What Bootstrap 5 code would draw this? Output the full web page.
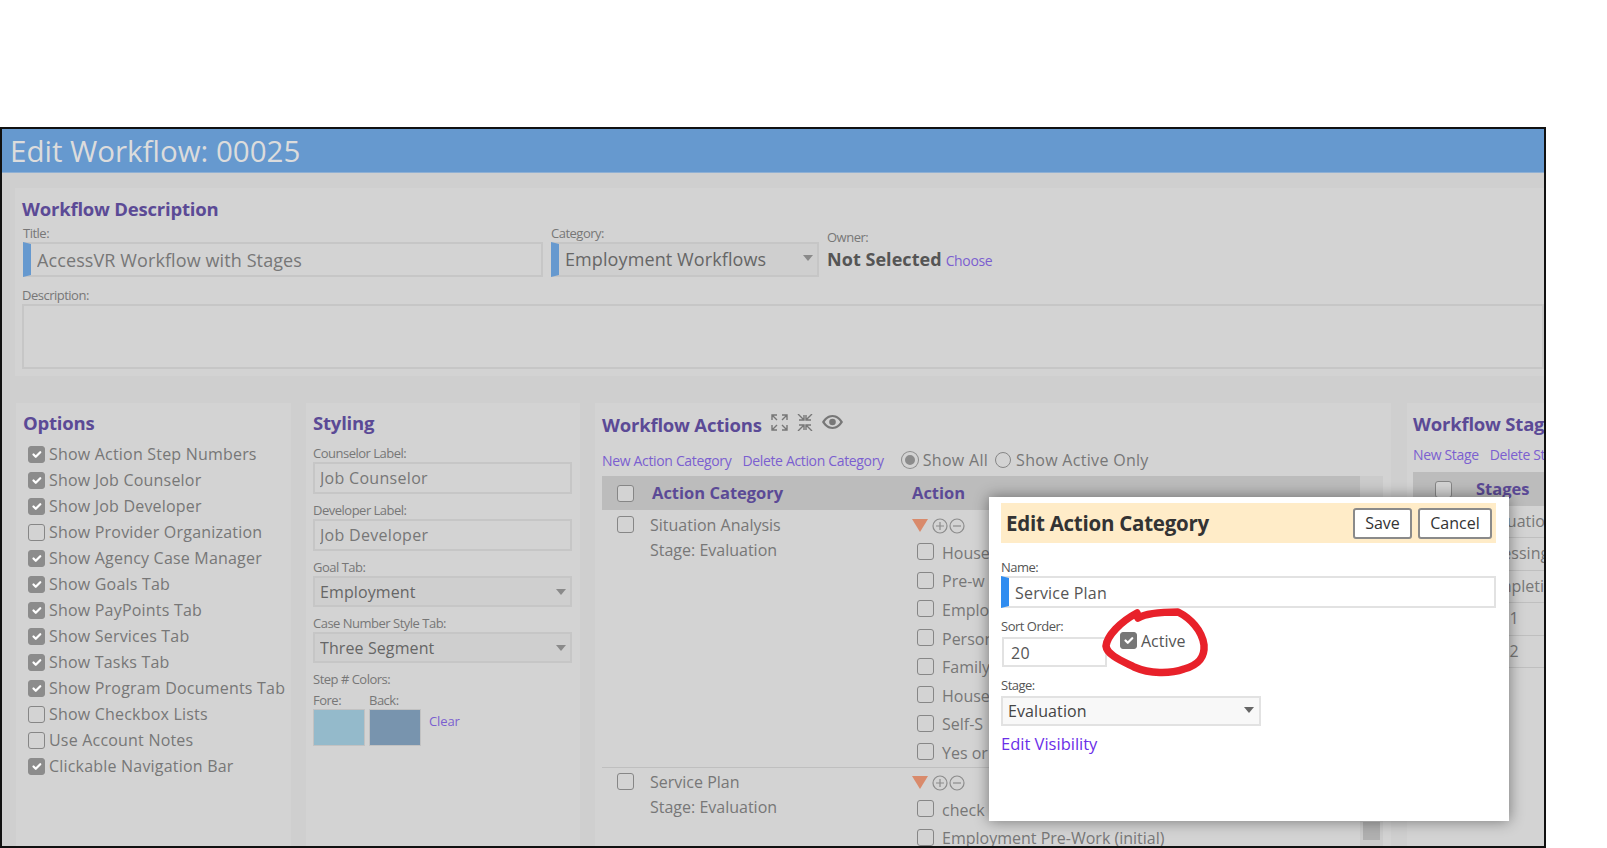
<!DOCTYPE html>
<html lang="en">
<head>
    <meta charset="UTF-8">
    <meta name="viewport" content="width=device-width, initial-scale=1.0">
    <title>Edit Workflow: 00025</title>
    <link href="https://cdn.jsdelivr.net/npm/bootstrap@5.3.0/dist/css/bootstrap.min.css" rel="stylesheet">
    <style>
        body {
            margin: 0;
            background: #fff;
            font-family: "Open Sans", "Liberation Sans", sans-serif;
            color: #777;
            overflow: hidden;
        }

        .wf-frame {
            position: relative;
            margin-top: 127px;
            width: 1546px;
            height: 721px;
            border: 2px solid #111;
            background: #cfcfcf;
            overflow: hidden;
        }

        .wf-head {
            height: 44px;
            padding-left: 8px;
            background: #6699cf;
            color: #dcdcdc;
            font-size: 29.5px;
            line-height: 44px;
            border-bottom: 1px solid #8fb0d4;
        }

        .wf-panel { background: #d3d3d3; }
        .wf-desc { height: 188px; margin: 15px 0 27px 13px; padding: 8px 0 0 7px; }
        .wf-lower { height: 445px; }
        .wf-options { width: 275px; margin-left: 14px; padding: 7px 0 0 7px; }
        .wf-styling { width: 274px; margin-left: 15px; padding: 7px 8px 0 7px; }
        .wf-actions { width: 796px; margin-left: 15px; padding: 7px 8px 0 7px; }
        .wf-stages { width: 137px; margin-left: 16px; padding: 8px 0 0 6px; overflow: hidden; }

        .wf-title {
            margin: 0;
            color: #5b4a96;
            font-size: 18.5px;
            font-weight: 700;
            line-height: 26px;
            letter-spacing: -.2px;
            white-space: nowrap;
        }

        .wf-lbl {
            display: block;
            margin: 0;
            font-size: 13px;
            line-height: 18px;
            letter-spacing: -.5px;
            white-space: nowrap;
        }
        .wf-lblgap { margin-top: 7px; }

        .wf-link { color: #7b5fd0; text-decoration: none; font-size: 14px; letter-spacing: -.34px; white-space: nowrap; }

        .wf-input.form-control, .wf-input.form-select {
            height: 32px;
            padding: 0 5px;
            border: 2px solid #c6c6c6;
            border-radius: 0;
            background-color: #d3d3d3;
            color: #777;
            font-size: 16px;
            letter-spacing: .3px;
            box-shadow: none;
            opacity: 1;
        }

        textarea.wf-input.form-control { resize: none; }

        .wf-input.form-select {
            height: 31px;
            color: #666;
            letter-spacing: .1px;
            background-color: #cfcfcf;
            background-image: none;
        }

        .wf-selbox { position: relative; }
        .wf-selbox::after {
            content: "";
            position: absolute;
            right: 6px;
            top: 13px;
            border-left: 5px solid transparent;
            border-right: 5px solid transparent;
            border-top: 6px solid #8a8a8a;
        }

        .wf-barred.form-control, .wf-barred.form-select { border-left: 8px solid #6699cf; padding-left: 6px; font-size: 18px; height: 35px; letter-spacing: .1px; }

        .wf-fields { padding-left: 1px; margin-top: 2px; }
        .wf-owner { color: #555; font-size: 18px; letter-spacing: .05px; }
        .wf-descgap { margin-top: 9px; }

        .form-check-input.wf-check, .form-check-input.wf-radio {
            flex: none;
            width: 17px;
            height: 17px;
            margin: 0;
            background-color: #d3d3d3;
            border: 1px solid #868686;
            opacity: 1;
        }
        .form-check-input.wf-radio { width: 16px; height: 16px; margin-left: 18px; }
        .form-check-input.wf-radio + .wf-radiotxt + .wf-radio { margin-left: 7px; }
        .form-check-input.wf-check { border-radius: 3px; }
        .form-check-input.wf-check:checked { background-color: #8c8c8c; border-color: #8c8c8c; }
        .form-check-input.wf-radio:checked {
            background-color: #8c8c8c;
            border: 3px solid #d3d3d3;
            box-shadow: 0 0 0 1px #8c8c8c;
            background-image: none;
        }

        .wf-optlist { padding-top: 1px; }
        .wf-optrow { height: 26px; padding-left: 5px; font-size: 16px; letter-spacing: .2px; white-space: nowrap; }

        .wf-swatch { width: 52px; height: 37px; border: 1px solid #c2c2c2; }
        .wf-colors { margin-top: 3px; }
        .wf-clear { font-size: 13px; margin: 21px 0 0 8px; letter-spacing: -.1px; }

        .wf-headrow { height: 28px; padding-top: 2px; }
        .wf-icon { margin: 0 0 6px 9px; }
        .wf-actlinks { margin: 10px 0 4px; height: 24px; }
        .wf-radiotxt { font-size: 16px; letter-spacing: .3px; white-space: nowrap; margin-left: 5px; }
        .wf-linkgap { margin-left: 11px; }

        .wf-thead { height: 34px; background: #bcbcbc; }
        .wf-th { color: #5b4a96; font-size: 16.5px; font-weight: 700; white-space: nowrap; padding-top: 1px; }
        .wf-thgap { margin-left: 18px; }
        .wf-scroll { width: 23px; background: #cbcbcb; flex: none; padding: 346px 3px 0; }
        .wf-thumb { height: 18px; background: #b0b0b0; }
        .wf-catcol { width: 310px; padding-left: 15px; flex: none; font-size: 16px; white-space: nowrap; }
        .wf-catline { height: 25px; line-height: 25px; padding-left: 33px; }
        .wf-catcol .wf-catline:first-of-type { margin-top: -3px; }
        .wf-group { border-bottom: 1px solid #bfbfbf; height: 258px; padding-top: 6px; }
        .wf-group2 { padding-top: 5px; }
        .wf-item { height: 28.6px; padding: 3px 0 0 5px; font-size: 16px; white-space: nowrap; }
        .wf-item .wf-check { margin-bottom: 2px; }
        .wf-tools { height: 18px; margin-bottom: 3px; padding-top: 1px; }

        .wf-stagelinks { margin: 5px 0 6px 0; height: 24px; align-items: center; }
        .wf-stagehead { padding-left: 22px; gap: 24px; }
        .wf-stagerow { height: 32.4px; padding-left: 64px; font-size: 16px; white-space: nowrap; border-bottom: 1px solid #bfbfbf; line-height: 31px; }

        .wf-modal {
            position: absolute;
            left: 987px;
            top: 368px;
            width: 520px;
            height: 324px;
            padding: 6px 13px 0 12px;
            background: #fff;
            box-shadow: 0 0 14px rgba(0, 0, 0, .45);
            color: #555;
        }
        .wf-mhead { height: 40px; padding: 0 4px 0 5px; background: #ffecc8; }
        .wf-mtitle { margin: 0; color: #333; font-size: 20.5px; font-weight: 700; letter-spacing: -.25px; }
        .wf-btngap { gap: 6px; }
        .btn.wf-btn {
            height: 31px;
            padding: 0;
            border: 2px solid #8a8a8a;
            border-radius: 3px;
            background: #fff;
            color: #333;
            font-size: 16px;
            line-height: 26px;
        }
        .wf-modal .wf-input.form-control { background-color: #fff; color: #555; border-color: #e2e2e2; }
        .wf-modal .wf-barred.form-control { border-left-color: #2f8cf0; height: 32px; font-size: 16px; letter-spacing: .2px; padding-top: 1px; }
        .wf-modal .wf-input.form-select { background-color: #f8f8f8; color: #444; border-color: #e2e2e2; height: 30px; }
        .wf-modal .wf-check { background-color: #fff; }
        .wf-modal .wf-check:checked { background-color: #777; border-color: #777; }
        .wf-modal .wf-selbox::after { right: 7px; border-top-color: #666; top: 11px; }
        .wf-namelbl { margin-top: 15px; }
        .wf-sortrow { margin-top: 9px; }
        .wf-sortinput.form-control { width: 105px; height: 30px; margin: 2px 0 0 1px; padding: 1px 0 0 7px; }
        .wf-activebox { margin: -3px 0 0 13px; }
        .wf-stagelbl { margin-top: 9px; }
        .wf-stagepick { width: 260px; margin-top: 2px; }
        .wf-vislink { color: #6a2ee8; text-decoration: none; font-size: 16.5px; margin-top: 6px; }
        .wf-ring { position: absolute; left: 113px; top: 108px; }
    </style>
</head>
<body>
    <div class="wf-frame">
        <div class="wf-head">Edit Workflow: 00025</div>

        <!-- description block -->
        <div class="wf-panel wf-desc">
            <h2 class="wf-title">Workflow Description</h2>
            <div class="d-flex wf-fields">
                <div>
                    <label class="wf-lbl">Title:</label>
                    <input class="form-control wf-input wf-barred" style="width:520px" value="AccessVR Workflow with Stages" disabled>
                </div>
                <div class="ms-2">
                    <label class="wf-lbl">Category:</label>
                    <div class="wf-selbox" style="width:268px">
                        <select class="form-select wf-input wf-barred" disabled><option>Employment Workflows</option></select>
                    </div>
                </div>
                <div class="ms-2">
                    <label class="wf-lbl mt-1">Owner:</label>
                    <div class="d-flex align-items-baseline gap-1">
                        <strong class="wf-owner">Not Selected</strong>
                        <a class="wf-link" href="#">Choose</a>
                    </div>
                </div>
            </div>
            <label class="wf-lbl wf-descgap">Description:</label>
            <textarea class="form-control wf-input" style="height:65px" disabled></textarea>
        </div>

        <div class="d-flex wf-lower">
            <!-- options -->
            <div class="wf-panel wf-options">
                <h3 class="wf-title mb-1">Options</h3>
                <div class="wf-optlist">
                    <div class="d-flex align-items-center gap-1 wf-optrow"><input class="form-check-input wf-check" type="checkbox" checked disabled>Show Action Step Numbers</div>
                    <div class="d-flex align-items-center gap-1 wf-optrow"><input class="form-check-input wf-check" type="checkbox" checked disabled>Show Job Counselor</div>
                    <div class="d-flex align-items-center gap-1 wf-optrow"><input class="form-check-input wf-check" type="checkbox" checked disabled>Show Job Developer</div>
                    <div class="d-flex align-items-center gap-1 wf-optrow"><input class="form-check-input wf-check" type="checkbox" disabled>Show Provider Organization</div>
                    <div class="d-flex align-items-center gap-1 wf-optrow"><input class="form-check-input wf-check" type="checkbox" checked disabled>Show Agency Case Manager</div>
                    <div class="d-flex align-items-center gap-1 wf-optrow"><input class="form-check-input wf-check" type="checkbox" checked disabled>Show Goals Tab</div>
                    <div class="d-flex align-items-center gap-1 wf-optrow"><input class="form-check-input wf-check" type="checkbox" checked disabled>Show PayPoints Tab</div>
                    <div class="d-flex align-items-center gap-1 wf-optrow"><input class="form-check-input wf-check" type="checkbox" checked disabled>Show Services Tab</div>
                    <div class="d-flex align-items-center gap-1 wf-optrow"><input class="form-check-input wf-check" type="checkbox" checked disabled>Show Tasks Tab</div>
                    <div class="d-flex align-items-center gap-1 wf-optrow"><input class="form-check-input wf-check" type="checkbox" checked disabled>Show Program Documents Tab</div>
                    <div class="d-flex align-items-center gap-1 wf-optrow"><input class="form-check-input wf-check" type="checkbox" disabled>Show Checkbox Lists</div>
                    <div class="d-flex align-items-center gap-1 wf-optrow"><input class="form-check-input wf-check" type="checkbox" disabled>Use Account Notes</div>
                    <div class="d-flex align-items-center gap-1 wf-optrow"><input class="form-check-input wf-check" type="checkbox" checked disabled>Clickable Navigation Bar</div>
                </div>
            </div>

            <!-- styling -->
            <div class="wf-panel wf-styling">
                <h3 class="wf-title">Styling</h3>
                <label class="wf-lbl mt-2">Counselor Label:</label>
                <input class="form-control wf-input" value="Job Counselor" disabled>
                <label class="wf-lbl wf-lblgap">Developer Label:</label>
                <input class="form-control wf-input" value="Job Developer" disabled>
                <label class="wf-lbl wf-lblgap">Goal Tab:</label>
                <div class="wf-selbox"><select class="form-select wf-input" disabled><option>Employment</option></select></div>
                <label class="wf-lbl wf-lblgap">Case Number Style Tab:</label>
                <div class="wf-selbox"><select class="form-select wf-input" disabled><option>Three Segment</option></select></div>
                <label class="wf-lbl wf-lblgap">Step # Colors:</label>
                <div class="d-flex wf-colors">
                    <div class="me-1"><span class="wf-lbl">Fore:</span><div class="wf-swatch" style="background:#94bacb"></div></div>
                    <div><span class="wf-lbl">Back:</span><div class="wf-swatch" style="background:#7894ae"></div></div>
                    <a class="wf-link wf-clear" href="#">Clear</a>
                </div>
            </div>

            <!-- workflow actions -->
            <div class="wf-panel wf-actions">
                <div class="d-flex align-items-center wf-headrow">
                    <h3 class="wf-title">Workflow Actions</h3>
                    <svg class="wf-icon" width="17" height="17" viewBox="0 0 17 17" fill="none" stroke="#777" stroke-width="1.4"><path d="M1 6V1h5M1 1l5 5M16 6V1h-5M16 1l-5 5M1 11v5h5M1 16l5-5M16 11v5h-5M16 16l-5-5"/></svg>
                    <svg class="wf-icon" width="16" height="17" viewBox="0 0 16 17" fill="none" stroke="#777" stroke-width="1.4"><path d="M2 6h5V1M7 6L1 0M14 6H9V1M9 6l6-6M2 11h5v5M7 11l-6 6M14 11H9v5M9 11l6 6"/></svg>
                    <svg class="wf-icon" width="21" height="14" viewBox="0 0 21 14"><path d="M10.500 0C5.500 0 2 3.500 0 7c2 3.500 5.500 7 10.500 7S19 10.500 21 7c-2-3.500-5.500-7-10.500-7zm0 2c3.500 0 6 2.300 7.800 5-1.800 2.700-4.300 5-7.800 5s-6-2.300-7.800-5C4.500 4.300 7 2 10.500 2z" fill="#777"/><circle cx="10.500" cy="7" r="3.300" fill="#777"/></svg>
                </div>
                <div class="d-flex align-items-center wf-actlinks">
                    <a class="wf-link" href="#">New Action Category</a>
                    <a class="wf-link wf-linkgap" href="#">Delete Action Category</a>
                    <input class="form-check-input wf-radio" type="radio" name="wfshow" checked disabled>
                    <span class="wf-radiotxt">Show All</span>
                    <input class="form-check-input wf-radio" type="radio" name="wfshow" disabled>
                    <span class="wf-radiotxt">Show Active Only</span>
                </div>
                <div class="d-flex">
                    <div class="flex-grow-1">
                        <div class="d-flex align-items-center wf-thead">
                            <div class="wf-catcol d-flex align-items-center"><input class="form-check-input wf-check" type="checkbox" disabled><span class="wf-th wf-thgap">Action Category</span></div>
                            <span class="wf-th">Action</span>
                        </div>
                        <div class="d-flex wf-group">
                            <div class="wf-catcol position-relative">
                                <input class="form-check-input wf-check position-absolute" type="checkbox" disabled>
                                <div class="wf-catline">Situation Analysis</div>
                                <div class="wf-catline">Stage: Evaluation</div>
                            </div>
                            <div>
                                <div class="d-flex align-items-center gap-1 wf-tools">
                                    <svg width="16" height="13" viewBox="0 0 16 13"><path d="M0 0h16L8 13z" fill="#d98a6b"/></svg>
                                    <svg width="33" height="16" viewBox="0 0 33 16" fill="none" stroke="#8c8c8c" stroke-width="1.2"><circle cx="8" cy="8" r="7"/><path d="M8 4v8M4 8h8"/><circle cx="25" cy="8" r="7"/><path d="M21 8h8"/></svg>
                                </div>
                                <div class="d-flex align-items-center gap-2 wf-item"><input class="form-check-input wf-check" type="checkbox" disabled>House</div>
                                <div class="d-flex align-items-center gap-2 wf-item"><input class="form-check-input wf-check" type="checkbox" disabled>Pre-w</div>
                                <div class="d-flex align-items-center gap-2 wf-item"><input class="form-check-input wf-check" type="checkbox" disabled>Emplo</div>
                                <div class="d-flex align-items-center gap-2 wf-item"><input class="form-check-input wf-check" type="checkbox" disabled>Person</div>
                                <div class="d-flex align-items-center gap-2 wf-item"><input class="form-check-input wf-check" type="checkbox" disabled>Family</div>
                                <div class="d-flex align-items-center gap-2 wf-item"><input class="form-check-input wf-check" type="checkbox" disabled>House</div>
                                <div class="d-flex align-items-center gap-2 wf-item"><input class="form-check-input wf-check" type="checkbox" disabled>Self-S</div>
                                <div class="d-flex align-items-center gap-2 wf-item"><input class="form-check-input wf-check" type="checkbox" disabled>Yes or</div>
                            </div>
                        </div>
                        <div class="d-flex wf-group2">
                            <div class="wf-catcol position-relative">
                                <input class="form-check-input wf-check position-absolute" type="checkbox" disabled>
                                <div class="wf-catline">Service Plan</div>
                                <div class="wf-catline">Stage: Evaluation</div>
                            </div>
                            <div>
                                <div class="d-flex align-items-center gap-1 wf-tools">
                                    <svg width="16" height="13" viewBox="0 0 16 13"><path d="M0 0h16L8 13z" fill="#d98a6b"/></svg>
                                    <svg width="33" height="16" viewBox="0 0 33 16" fill="none" stroke="#8c8c8c" stroke-width="1.2"><circle cx="8" cy="8" r="7"/><path d="M8 4v8M4 8h8"/><circle cx="25" cy="8" r="7"/><path d="M21 8h8"/></svg>
                                </div>
                                <div class="d-flex align-items-center gap-2 wf-item"><input class="form-check-input wf-check" type="checkbox" disabled>check</div>
                                <div class="d-flex align-items-center gap-2 wf-item"><input class="form-check-input wf-check" type="checkbox" disabled>Employment Pre-Work (initial)</div>
                            </div>
                        </div>
                    </div>
                    <div class="wf-scroll"><div class="wf-thumb"></div></div>
                </div>
            </div>

            <!-- workflow stages, runs off the frame -->
            <div class="wf-panel wf-stages">
                <h3 class="wf-title">Workflow Stages</h3>
                <div class="d-flex wf-stagelinks">
                    <a class="wf-link" href="#">New Stage</a>
                    <a class="wf-link wf-linkgap" href="#">Delete Stage</a>
                </div>
                <div class="d-flex align-items-center wf-thead wf-stagehead">
                    <input class="form-check-input wf-check" type="checkbox" disabled><span class="wf-th">Stages</span>
                </div>
                <div class="wf-stagerow">Evaluation</div>
                <div class="wf-stagerow">Assessing</div>
                <div class="wf-stagerow">Completion</div>
                <div class="wf-stagerow">Tier 1</div>
                <div class="wf-stagerow">Tier 2</div>
            </div>
        </div>

        <!-- dialog on top of the page -->
        <div class="wf-modal">
            <div class="d-flex align-items-center justify-content-between wf-mhead">
                <h4 class="wf-mtitle">Edit Action Category</h4>
                <div class="d-flex wf-btngap">
                    <button class="btn wf-btn" style="width:59px">Save</button>
                    <button class="btn wf-btn" style="width:74px">Cancel</button>
                </div>
            </div>
            <label class="wf-lbl wf-namelbl">Name:</label>
            <input class="form-control wf-input wf-barred" value="Service Plan">
            <div class="d-flex wf-sortrow">
                <div>
                    <label class="wf-lbl">Sort Order:</label>
                    <input class="form-control wf-input wf-sortinput" value="20">
                </div>
                <div class="d-flex align-items-center gap-1 wf-activebox">
                    <input class="form-check-input wf-check" type="checkbox" checked>
                    <span>Active</span>
                </div>
            </div>
            <label class="wf-lbl wf-stagelbl">Stage:</label>
            <div class="wf-selbox wf-stagepick"><select class="form-select wf-input"><option>Evaluation</option></select></div>
            <a class="wf-vislink d-inline-block" href="#">Edit Visibility</a>
            <svg class="wf-ring" width="115" height="78" viewBox="1100 605 115 78" fill="none" stroke="#e8212a" stroke-width="7.500" stroke-linecap="round" stroke-linejoin="round">
                <path d="M1136 618C1146 612 1165 612 1176 612C1188 618 1200 630 1202 645C1203 658 1196 665 1182 669C1168 674 1148 674 1132 667C1120 661 1105 655 1104 646C1105 636 1118 622 1135 613"/>
            </svg>
        </div>
    </div>

    <script src="https://cdn.jsdelivr.net/npm/bootstrap@5.3.0/dist/js/bootstrap.bundle.min.js"></script>
</body>
</html>
